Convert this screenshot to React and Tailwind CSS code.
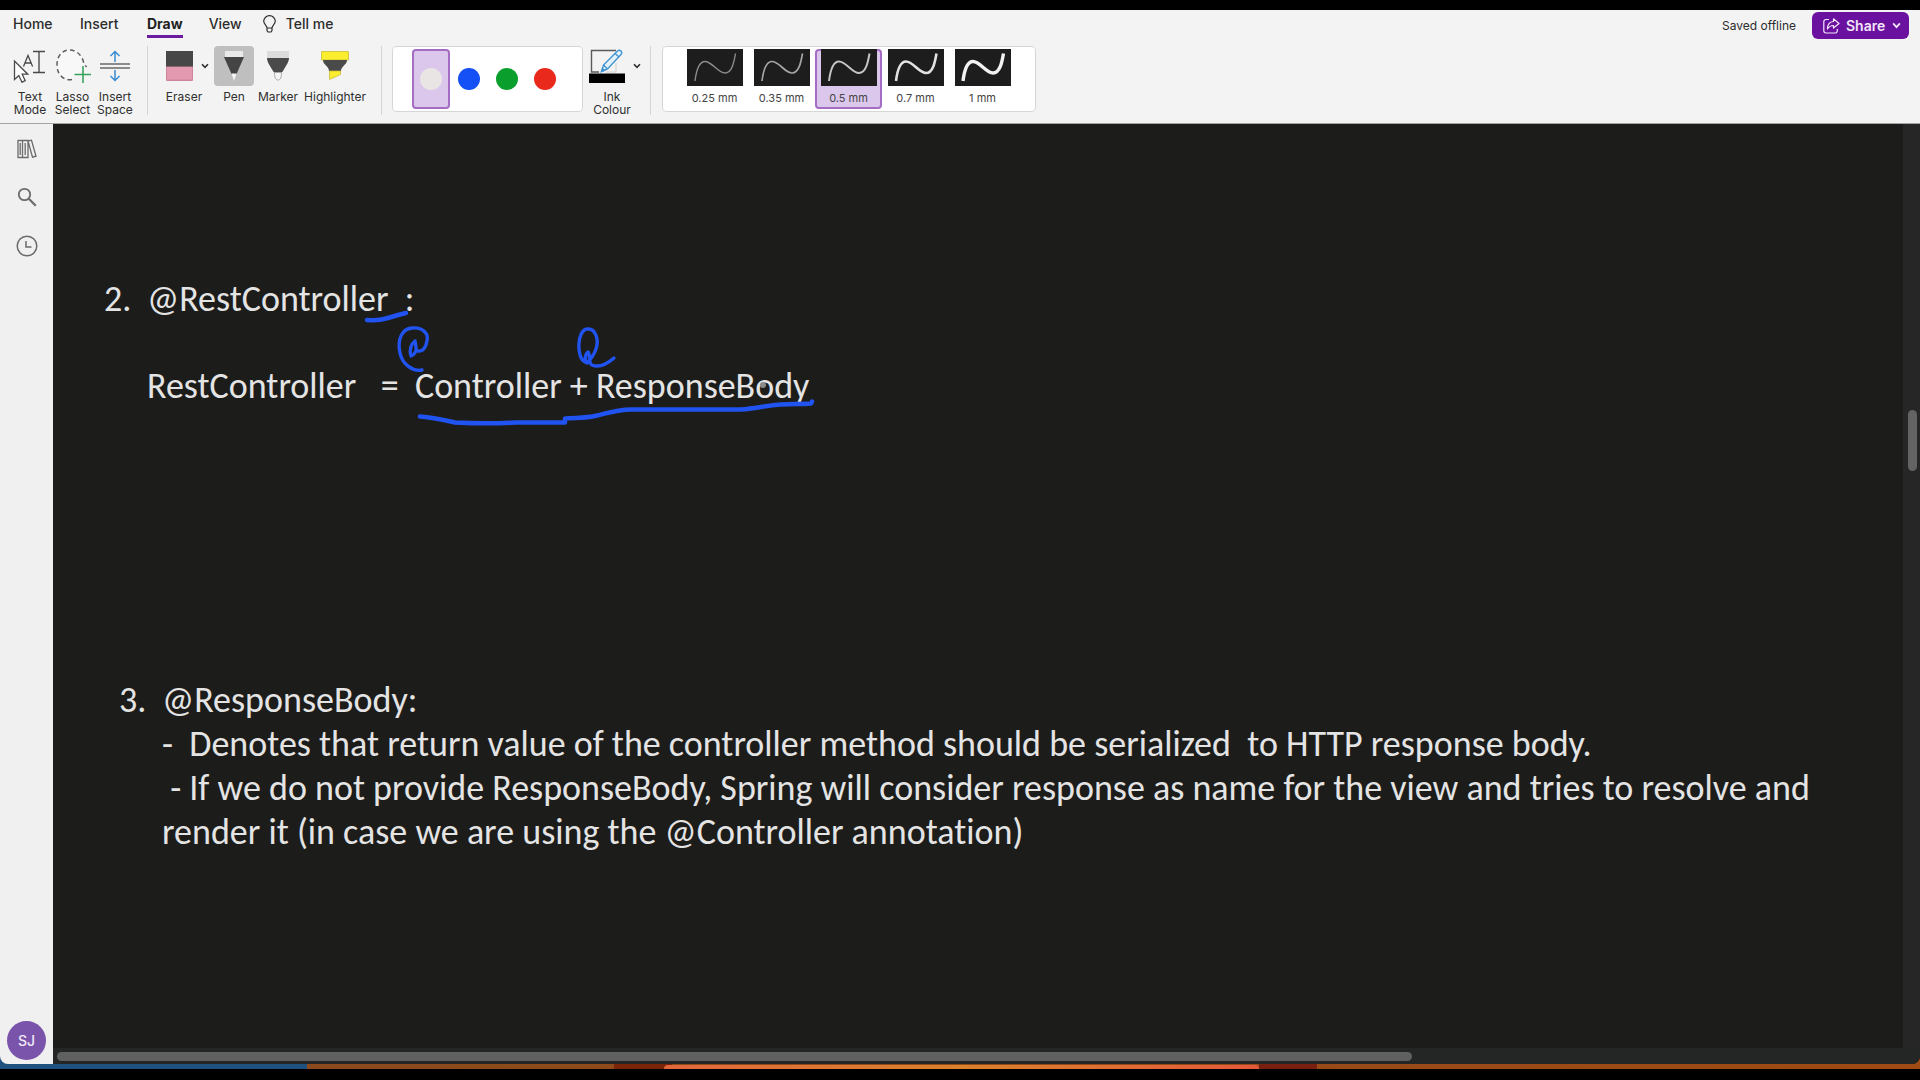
import React from "react";

const SWATCHES = [
  { name: "White", fill: "bg-[#e9e5e4]", selected: true },
  { name: "Blue", fill: "bg-[#1450f5]" },
  { name: "Green", fill: "bg-[#0a9f2c]" },
  { name: "Red", fill: "bg-[#e8291b]" },
];

const WIDTHS = [
  { label: "0.25 mm", stroke: 1.4, color: "#8d8d8d" },
  { label: "0.35 mm", stroke: 1.7, color: "#a6a6a6" },
  { label: "0.5 mm", stroke: 2, color: "#c4c4c4", selected: true },
  { label: "0.7 mm", stroke: 2.6, color: "#e2e2e2" },
  { label: "1 mm", stroke: 3.4, color: "#f2f2f2" },
];

function Chevron({ className }) {
  return (
    <svg viewBox="0 0 8 6" className={className} fill="none" stroke="currentColor" strokeWidth="1.6" aria-hidden="true">
      <path d="M1 1.2 4 4.4 7 1.2" />
    </svg>
  );
}

function TextModeIcon() {
  return (
    <svg width="34" height="34" viewBox="0 0 34 34" fill="none" stroke="#4a4a4a" aria-hidden="true">
      <path d="M10.5 17.5 15 6.5l4.6 11M12 14h6" strokeWidth="1.3" />
      <path d="M20 2.5h12M20 23.5h12M26 2.5v21" strokeWidth="1.4" />
      <path d="M1.5 12v18.5l4.300-4 3.200 6.700 3.200-1.500-3-6.500h5.600z" fill="#fff" strokeWidth="1.3" />
    </svg>
  );
}

function LassoIcon() {
  return (
    <svg width="36" height="36" viewBox="0 0 36 36" fill="none" aria-hidden="true">
      <path d="M17 31.5C8 33 2 26 2 17S7 2 14.5 2 27 8 28.5 14c.7 2.500 2 3.500 3 5" stroke="#5c5c5c" strokeWidth="1.5" strokeDasharray="4.5 3.2" fill="#f8f8f8" />
      <path d="M28 18v17M19.5 26.5h17" stroke="#35a35d" strokeWidth="1.6" />
    </svg>
  );
}

function InsertSpaceIcon() {
  return (
    <svg width="30" height="32" viewBox="0 0 30 32" fill="none" aria-hidden="true">
      <path d="M15 12V1.5M10.5 6 15 1.5 19.5 6M15 20v10.5M10.5 26l4.500 4.500 4.500-4.500" stroke="#3a8dd0" strokeWidth="1.5" />
      <path d="M0 14h30M0 18h30" stroke="#6a6a6a" strokeWidth="1.5" />
    </svg>
  );
}

function EraserIcon() {
  return (
    <svg width="27" height="30" viewBox="0 0 27 30" className="shrink-0" aria-hidden="true">
      <rect width="27" height="30" rx="1" fill="#d0849a" />
      <rect x="1" y="16" width="25" height="12.5" fill="#e39ab0" />
      <path d="M0 0h27v15.5H0z" fill="#474747" />
    </svg>
  );
}

function PenIcon() {
  return (
    <svg width="22" height="30" viewBox="0 0 22 30" aria-hidden="true">
      <path d="M2 0h18v6H2z" fill="#e9e9e9" />
      <path d="M1 6h20l-7.500 17h-5z" fill="#444" />
      <path d="M8.5 22.5h5L11 30z" fill="#f6f6f6" />
    </svg>
  );
}

function MarkerIcon() {
  return (
    <svg width="24" height="30" viewBox="0 0 24 30" aria-hidden="true">
      <path d="M1 0h22v7H1z" fill="#dcdcdc" />
      <path d="M1 7h22c0 4-3 8-7 14.5H8C4 15 1 11 1 7z" fill="#4a4a4a" />
      <path d="M8.5 21.5h7c0 5-1 7.5-3.5 7.5s-3.500-2.500-3.500-7.500z" fill="#f3f3f3" stroke="#a9a9a9" />
    </svg>
  );
}

function HighlighterIcon() {
  return (
    <svg width="28" height="30" viewBox="0 0 28 30" aria-hidden="true">
      <path d="M.5.5h27v8.5H.5z" fill="#fbee2e" stroke="#c8bd3a" strokeWidth=".8" />
      <path d="M2 9h24c0 5-6 6-6 11H8c0-5-6-6-6-11z" fill="#4a4a4a" />
      <path d="M8.5 20h11v3.5l-11 5z" fill="#fbee2e" stroke="#c8bd3a" strokeWidth=".8" />
    </svg>
  );
}

function InkColourIcon() {
  return (
    <svg width="36" height="34" viewBox="0 0 36 34" className="shrink-0" fill="none" aria-hidden="true">
      <path d="M27 1.5H2.5V23H10" stroke="#5a5a5a" strokeWidth="1.4" />
      <path d="M17 23h10v-9" stroke="#cfcfcf" />
      <path d="M12.5 22.5 14.5 16 28.5 2c1-1 2.500-1 3.500 0s1 2.500 0 3.500L18.5 20z" fill="#e3f1fb" stroke="#3f93cf" strokeWidth="1.4" />
      <path d="m26 4.5 4 3.500M14.5 16l4 4M12.5 22.5l1-3 2 2z" stroke="#3f93cf" strokeWidth="1.3" />
      <path d="M0 24.5h36V34H0z" fill="#000" />
    </svg>
  );
}

function Tool({ label, icon, width, chevron, active }) {
  return (
    <button type="button" aria-pressed={!!active} className={"flex flex-col items-center text-xs leading-[13px] text-[#2f2f2f] " + width}>
      <span className={"flex h-10 items-center justify-center " + (active ? "w-10 rounded bg-[#bfbfbf]" : chevron ? "w-full pl-1.5" : "w-full")}>
        {icon}
        {chevron && <Chevron className="ml-2 h-1.5 w-2 shrink-0" />}
      </span>
      <span className="mt-1 text-center">{label}</span>
    </button>
  );
}

function Divider({ className }) {
  return <div className={"h-[69px] w-px shrink-0 bg-[#d4d4d4] " + className} />;
}

function Ribbon() {
  return (
    <header className="border-b border-[#a3a3a3] bg-[#f3f3f3] pb-[7px] text-[#2c2c2c]">
      <div className="flex h-9 items-start justify-between pr-[11px] pl-[13px]">
        <nav className="flex items-start text-sm font-medium">
          <button type="button" className="mt-1 w-[67px] text-left">Home</button>
          <button type="button" className="mt-1 w-[67px] text-left">Insert</button>
          <button type="button" aria-current="page" className="mt-1 border-b-[3px] border-[#6b1ba0] pb-px font-bold text-[#1f1f1f]">Draw</button>
          <button type="button" className="mt-1 ml-[26px] w-[54px] text-left">View</button>
          <button type="button" className="mt-1 flex items-center gap-2.5">
            <svg width="13" height="18" viewBox="0 0 13 18" fill="none" stroke="currentColor" strokeWidth="1.2" aria-hidden="true">
              <path d="M4 13c0-2.5-3.300-3.500-3.300-7A5.700 5.700 0 0 1 6.500.7 5.700 5.700 0 0 1 12.300 6C12.300 9.5 9 10.5 9 13zM4 13v2.500L5 17h3l1-1.500V13" />
            </svg>
            Tell me
          </button>
        </nav>
        <div className="flex items-start gap-4">
          <span className="mt-2 text-xs">Saved offline</span>
          <button type="button" className="mt-0.5 flex h-[27px] items-center rounded-md bg-[#6a11a0] pr-2 pl-[11px] text-sm font-semibold text-[#f3e6fa]">
            <svg width="17" height="16" viewBox="0 0 17 16" fill="none" stroke="currentColor" strokeWidth="1.2" strokeLinejoin="round" aria-hidden="true">
              <path d="M6 1.5H3A2.300 2.300 0 0 0 .8 3.800v9A2.300 2.300 0 0 0 3 15h9a2.300 2.300 0 0 0 2.300-2.300V11" />
              <path d="M10.5.8 16 5.5l-5.500 4.500V7.500C7.500 7.500 6 8.500 4.500 11c0-4 2-7.200 6-7.500z" />
            </svg>
            <span className="ml-1.5 w-[46px] text-left">Share</span>
            <Chevron className="h-[7px] w-[9px]" />
          </button>
        </div>
      </div>

      <div className="flex items-start pl-[9px]">
        <Tool width="w-[42px]" icon={<TextModeIcon />} label={<>Text<br />Mode</>} />
        <Tool width="w-[43px]" icon={<LassoIcon />} label={<>Lasso<br />Select</>} />
        <Tool width="w-[42px]" icon={<InsertSpaceIcon />} label={<>Insert<br />Space</>} />
        <Divider className="ml-[11px]" />
        <Tool width="ml-4 w-10" icon={<EraserIcon />} label="Eraser" chevron />
        <Tool width="ml-2.5 w-10" icon={<PenIcon />} label="Pen" active />
        <Tool width="ml-1 w-10" icon={<MarkerIcon />} label="Marker" />
        <Tool width="ml-1.5 w-[62px]" icon={<HighlighterIcon />} label="Highlighter" />
        <Divider className="ml-[15px]" />

        <fieldset className="ml-2.5 flex h-[66px] w-[191px] items-center rounded border border-[#d6d6d6] bg-white pl-[19px]">
          {SWATCHES.map((s) => (
            <label key={s.name} className={"flex h-[60px] w-[38px] items-center justify-center rounded border-2 " + (s.selected ? "border-[#a56cc3] bg-[#dcc7ec]" : "border-transparent")}>
              <input type="radio" name="ink" aria-label={s.name} defaultChecked={s.selected} className="sr-only" />
              <span className={"size-[22px] rounded-full " + s.fill} />
            </label>
          ))}
        </fieldset>
        <Tool width="ml-[5px] w-12" icon={<InkColourIcon />} label={<>Ink<br />Colour</>} chevron />
        <Divider className="ml-3.5" />

        <fieldset className="ml-[11px] flex h-[66px] w-[374px] items-center rounded border border-[#d6d6d6] bg-white pl-[18px]">
          {WIDTHS.map((w) => (
            <label key={w.label} className={"flex h-[60px] w-[67px] flex-col items-center rounded border-2 " + (w.selected ? "border-[#a56cc3] bg-[#dcc7ec]" : "border-transparent")}>
              <input type="radio" name="width" defaultChecked={w.selected} className="sr-only" />
              <svg width="56" height="37" viewBox="0 0 56 37" className="-mt-0.5 shrink-0 bg-[#1d1d1d]" fill="none" aria-hidden="true">
                <path d="M8 32c1-8 3-19.500 10-19.500S31 24 38 24s9-11 10.500-19.500" stroke={w.color} strokeWidth={w.stroke} />
              </svg>
              <span className="mt-1.5 text-[11px] leading-[13px] whitespace-nowrap text-[#444]">{w.label}</span>
            </label>
          ))}
        </fieldset>
      </div>
    </header>
  );
}

function Sidebar() {
  return (
    <aside className="flex w-[53px] shrink-0 flex-col items-center bg-[#f0f0f0] pt-[15px] pb-1 text-[#6b6b6b]">
      <button type="button" aria-label="Notebooks">
        <svg width="20" height="20" viewBox="0 0 20 20" fill="none" stroke="currentColor" strokeWidth="1.3">
          <path d="M1 1.5h4.500v17H1zM5.5 1.5H11v17H5.500zM3.2 4v12M8.2 4v12M11 2l3.500-.8 4.500 16-3.500 1z" />
        </svg>
      </button>
      <button type="button" aria-label="Search" className="mt-7">
        <svg width="20" height="20" viewBox="0 0 20 20" fill="none" stroke="currentColor" strokeWidth="1.8">
          <circle cx="7.5" cy="7.5" r="5.7" />
          <path d="m11.8 11.8 7 7" strokeWidth="2.2" />
        </svg>
      </button>
      <button type="button" aria-label="Recent" className="mt-7">
        <svg width="22" height="22" viewBox="0 0 22 22" fill="none" stroke="currentColor" strokeWidth="1.5">
          <circle cx="11" cy="11" r="9.8" />
          <path d="M10 6v6h5.500" />
        </svg>
      </button>
      <button type="button" className="mt-auto size-[39px] rounded-full bg-[#7a54ab] text-sm font-medium text-[#f1e9f8]">SJ</button>
    </aside>
  );
}

function InkStrokes() {
  return (
    <svg width="760" height="160" viewBox="90 290 760 160" className="pointer-events-none absolute top-[35px] left-[37px]" fill="none" stroke="#2053f0" strokeWidth="4.5" strokeLinecap="round" strokeLinejoin="round" aria-hidden="true">
      <path d="M367 320c8 1 14 0 21-2s13-4 18-5" />
      <path d="M422 370c-9 2-20-6-22-17-3-14 2-24 12-25 11-1 17 6 15 13-1 6-4 11-9 10" strokeWidth="3.4" />
      <path d="M415 341c-4 3-6 9-4 15 3-1 6-5 5-9z" strokeWidth="3.4" />
      <path d="M585 362c-9-4-8-32 2-33 9-1 12 11 9 20-2 6-6 11-9 14-3-3-2-9 1-11 3 4 0 11 4 13 7 3 15-1 22-7" strokeWidth="3.4" />
      <path d="M420 416.5c13 1 22 3 35 6 20 1 44 1 60 0h50v-4c12-1 20 0 32-3 12-3 22-6 34-6h110c14-1 26-4 40-5 12-1 18 0 30-1l1-2" />
      <circle cx="763" cy="385" r="3" fill="#8a8a8a" stroke="none" />
    </svg>
  );
}

function Note() {
  return (
    <main className="flex min-w-0 flex-1 flex-col bg-[#1c1c1b]">
      <div className="flex min-h-0 flex-1">
        <article className="min-w-0 flex-1 overflow-hidden font-['Carlito','Lato',sans-serif] text-[36px] leading-[44px] [font-variant-ligatures:none] whitespace-pre text-[#e4e4e4]">
          <section className="relative mt-[131px] pt-[22px] pl-[51px]">
            <div className="flex">
              <span className="w-[43px]">2.</span>
              <h2>@RestController  :</h2>
            </div>
            <p className="mt-[43px] ml-[43px]">{"RestController   =  Controller + ResponseBody"}</p>
            <InkStrokes />
          </section>
          <section className="mt-[270px] pl-[66px]">
            <div className="flex">
              <span className="w-[43px]">3.</span>
              <div>
                <h2>@ResponseBody:</h2>
                <p>{"-  Denotes that return value of the controller method should be serialized  to HTTP response body."}</p>
                <p>{" - If we do not provide ResponseBody, Spring will consider response as name for the view and tries to resolve and"}</p>
                <p>render it (in case we are using the @Controller annotation)</p>
              </div>
            </div>
          </section>
        </article>
        <div className="w-[17px] shrink-0 bg-[#262626] pt-[286px]">
          <div className="ml-[5px] h-[61px] w-[9px] rounded-full bg-[#636363]" />
        </div>
      </div>
      <div className="h-4 bg-[#242525] pt-1 pl-1">
        <div className="h-[9px] w-8/11 rounded-full bg-[#606060]" />
      </div>
    </main>
  );
}

export default function App() {
  return (
    <div className="flex h-screen flex-col bg-black pt-2.5 pb-[11px] font-['Inter',sans-serif]">
      <div className="flex min-h-0 flex-1 flex-col bg-linear-to-r from-[#20507f] from-16% via-[#8a4a1c] via-16% to-[#a04a14]">
        <div className="flex min-h-0 flex-1 flex-col overflow-hidden rounded-b-lg">
          <Ribbon />
          <div className="flex min-h-0 flex-1">
            <Sidebar />
            <Note />
          </div>
        </div>
        <div className="flex h-[5px] items-end">
          <div className="ml-[32%] h-[5px] w-[3%] bg-[#7a2408]" />
          <div className="-ml-2 h-1 w-[31%] rounded-t-full bg-linear-to-r from-[#e2683c] via-[#d9812b] to-[#e4583a]" />
          <div className="h-[5px] w-[3%] bg-[#7a2010]" />
        </div>
      </div>
    </div>
  );
}
